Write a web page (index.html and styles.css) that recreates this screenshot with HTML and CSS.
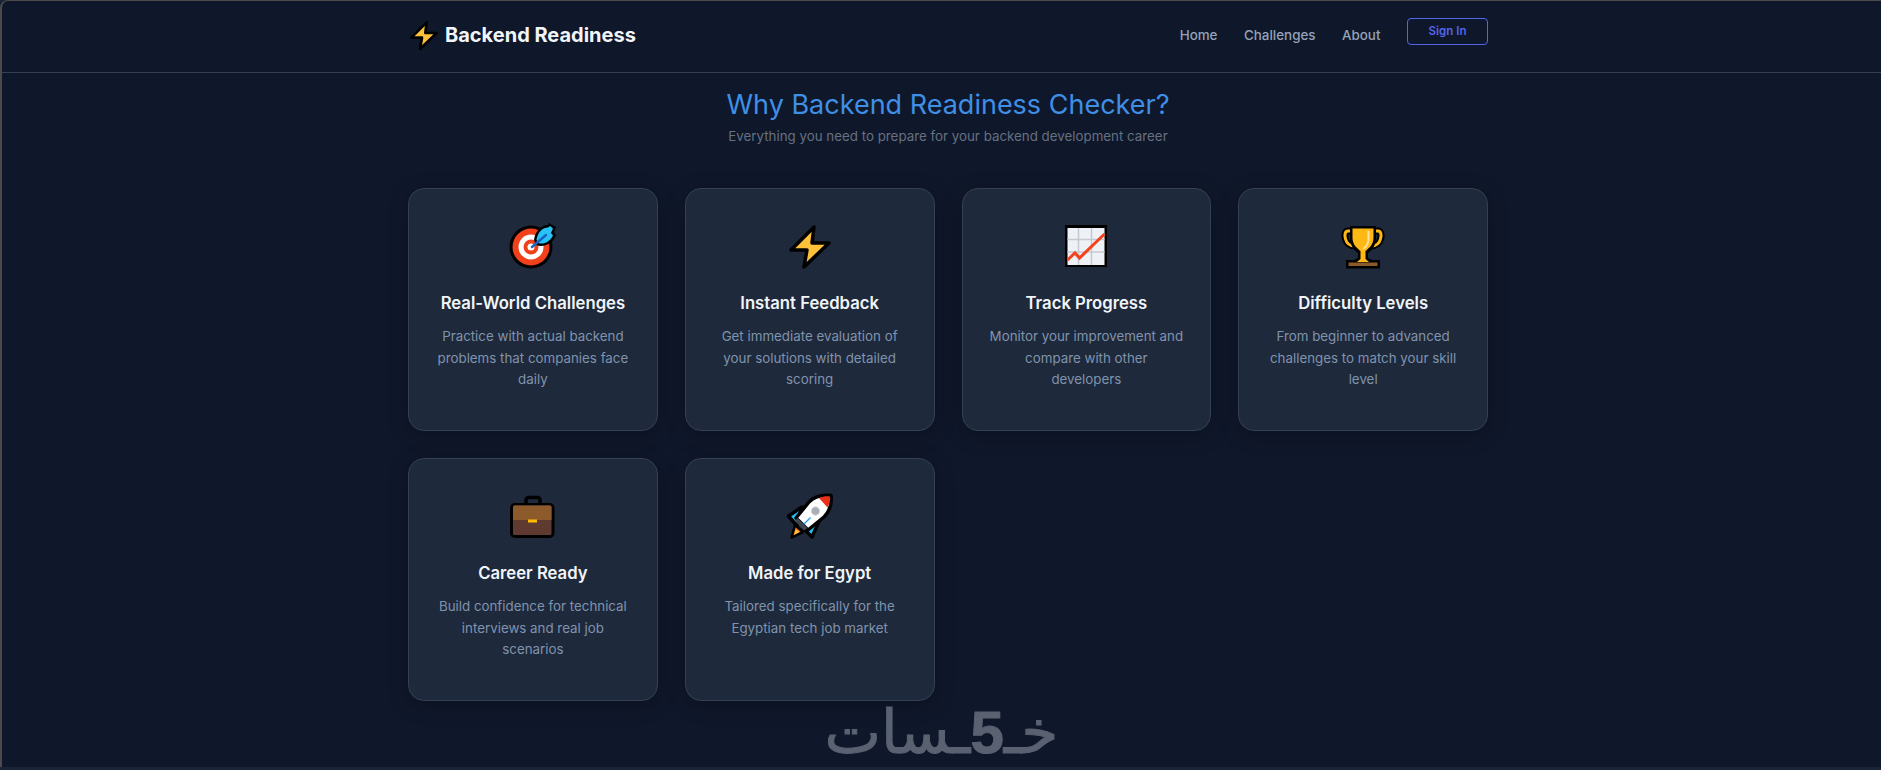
FILE: index.html
```html
<!DOCTYPE html>
<html lang="en">
  <head>
    <meta charset="UTF-8" />
    <meta name="viewport" content="width=device-width, initial-scale=1.0" />
    <title>Backend Readiness</title>
    <link rel="stylesheet" href="styles.css">
  </head>
  <body>
    <div id="page">
      <header id="top">
        <div class="top-inner">
          <a class="logo" href="#">
            <svg class="logo-icon" viewBox="0 0 48 48"><polygon points="28,5 5,28 21,28 18,45 43,21 26,21" fill="#ffc03a" stroke="#000" stroke-width="4" stroke-linejoin="round"/></svg>
            <span>Backend Readiness</span>
          </a>
          <nav class="menu">
            <a href="#">Home</a>
            <a href="#">Challenges</a>
            <a href="#">About</a>
            <a class="signin" href="#">Sign In</a>
          </nav>
        </div>
      </header>

      <section id="why">
        <h2>Why Backend Readiness Checker?</h2>
        <p class="sub">Everything you need to prepare for your backend development career</p>

        <div class="cards">
          <div class="card">
            <svg class="icon" viewBox="0 0 48 48">
              <circle cx="22" cy="25" r="21.5" fill="#000"/>
              <circle cx="22" cy="25" r="18.5" fill="#f0401c"/>
              <circle cx="22" cy="25" r="12.5" fill="#fff"/>
              <circle cx="22" cy="25" r="7.5" fill="#f0401c"/>
              <circle cx="22" cy="25" r="3.5" fill="#fff"/>
              <path d="M25 18 C26 9 33 3 39 3 L40 1 L47 5 L45 10 L47 13 C44 22 34 26 27 23 Z" fill="#000"/>
              <path d="M27.5 18 C28.5 10 34 5.5 39 5.5 L41 4 L44 6.5 L42 11 L44 13.5 C41 20 34 23 29.5 21 Z" fill="#29c2f6"/>
              <line x1="23" y1="25" x2="37" y2="13" stroke="#1666c0" stroke-width="2.5" stroke-linecap="round"/>
            </svg>
            <h3>Real-World Challenges</h3>
            <p>Practice with actual backend problems that companies face daily</p>
          </div>
          <div class="card">
            <svg class="icon" viewBox="0 0 48 48"><polygon points="28,5 5,28 21,28 18,45 43,21 26,21" fill="#ffc03a" stroke="#000" stroke-width="3.5" stroke-linejoin="round"/></svg>
            <h3>Instant Feedback</h3>
            <p>Get immediate evaluation of your solutions with detailed scoring</p>
          </div>
          <div class="card">
            <svg class="icon" viewBox="0 0 48 48">
              <rect x="3" y="3" width="42" height="42" fill="#000"/>
              <rect x="5.5" y="6" width="37" height="37" fill="#eef1f5"/>
              <path d="M16.5 6V43M29.5 6V43M5.5 17.5H42.5M5.5 30H42.5" stroke="#c6c9d1" stroke-width="1.5"/>
              <polyline points="5.5,38 13,31 17.5,36 42.5,12" fill="none" stroke="#f4411e" stroke-width="3"/>
            </svg>
            <h3>Track Progress</h3>
            <p>Monitor your improvement and compare with other developers</p>
          </div>
          <div class="card">
            <svg class="icon" viewBox="0 0 48 48">
              <path d="M14 9H9C5.500 9 5.500 14 6.500 17C7.500 21 11 24 16 24M34 9H39C42.500 9 42.500 14 41.500 17C40.500 21 37 24 32 24" fill="none" stroke="#000" stroke-width="7"/>
              <path d="M14 9H9C5.500 9 5.500 14 6.500 17C7.500 21 11 24 16 24M34 9H39C42.500 9 42.500 14 41.500 17C40.500 21 37 24 32 24" fill="none" stroke="#fdb813" stroke-width="3"/>
              <path d="M11 4H37V16C37 24 32 29 29 31V36L33 38H41V46.500H7V38H15L19 36V31C16 29 11 24 11 16Z" fill="#000"/>
              <path d="M13.500 6.500H34.500V16C34.500 23 29 27 26.500 29V37L30 40H18L21.500 37V29C19 27 13.500 23 13.500 16Z" fill="#fdb813"/>
              <rect x="9.500" y="40.500" width="29" height="3.500" fill="#8a5a2b"/>
              <path d="M29.500 9V18C29 22 27 25 24 27" fill="none" stroke="#ffe2a3" stroke-width="2"/>
            </svg>
            <h3>Difficulty Levels</h3>
            <p>From beginner to advanced challenges to match your skill level</p>
          </div>
          <div class="card">
            <svg class="icon" viewBox="0 0 48 48">
              <rect x="17" y="5.500" width="14" height="9" rx="2.500" fill="none" stroke="#000" stroke-width="3.500"/>
              <rect x="1" y="11" width="44.500" height="35" rx="5" fill="#000"/>
              <rect x="4" y="13.500" width="38.500" height="29.500" rx="1.500" fill="#5e3a30"/>
              <path d="M4 15A1.500 1.500 0 0 1 5.500 13.500H41A1.500 1.500 0 0 1 42.500 15V28H4Z" fill="#8d5a2c"/>
              <rect x="19" y="27.500" width="9" height="3" fill="#ffb900"/>
            </svg>
            <h3>Career Ready</h3>
            <p>Build confidence for technical interviews and real job scenarios</p>
          </div>
          <div class="card">
            <svg class="icon" viewBox="0 0 48 48">
              <polygon points="2.500,24 16,15 11,34" fill="#29c2f6" stroke="#000" stroke-width="3.500" stroke-linejoin="round"/>
              <polygon points="26,45 34,27 17,36" fill="#29c2f6" stroke="#000" stroke-width="3.500" stroke-linejoin="round"/>
              <polygon points="5.500,45.500 9,33 17,40" fill="#f0731c" stroke="#000" stroke-width="2.500" stroke-linejoin="round"/>
              <polygon points="8,43 10,37.500 13.500,40" fill="#ffc83a"/>
              <path d="M45 3.500C36 2.500 28 5 23 10L10 26L22 38L38 25C43 20 46 12 45 3.500Z" fill="#fff" stroke="#000" stroke-width="3.500" stroke-linejoin="round"/>
              <path d="M44 4.500C40 4 37 4.500 33 6L41.500 15.500C43.500 12 44.500 8.500 44 4.500Z" fill="#e8301a"/>
              <path d="M11.500 26L21.500 36L18 38.500L9 29Z" fill="#3e4450"/>
              <circle cx="29.500" cy="19" r="4.200" fill="#a9aeb7" stroke="#d6d9de"/>
              <line x1="18" y1="32" x2="24.500" y2="25.500" stroke="#29a3f0" stroke-width="1.500"/>
            </svg>
            <h3>Made for Egypt</h3>
            <p>Tailored specifically for the Egyptian tech job market</p>
          </div>
        </div>
      </section>

      <div class="mark" dir="rtl" lang="ar">خـ<b>5</b>ـسات</div>
    </div>
  </body>
</html>
```

FILE: styles.css
```css
* {
  margin: 0;
  padding: 0;
  box-sizing: border-box;
}
html,
body {
  height: 770px;
  overflow: hidden;
}
body {
  background-color: #1a2334;
  font-family: Inter, "Liberation Sans", sans-serif;
}
a {
  color: inherit;
  text-decoration: none;
}
#page {
  height: 767px;
  background-color: #0f172a;
  border-left: 2px solid #4a4a4c;
  border-top: 1px solid #4a4a4c;
  border-top-left-radius: 8px;
}

/* header */
#top {
  height: 72px;
  border-bottom: 1px solid #334155;
}
.top-inner {
  width: 1080px;
  margin-left: 406px;
  padding-bottom: 3px;
  height: 100%;
  display: flex;
  justify-content: space-between;
  align-items: center;
}
.logo {
  display: flex;
  align-items: center;
  gap: 5px;
  color: #f1f5f9;
  font-size: 20px;
  font-weight: 700;
}
.logo-icon {
  width: 32px;
  height: 32px;
}
.menu {
  display: flex;
  align-items: center;
  gap: 26.5px;
  color: #94a3b8;
  font-size: 13.4px;
  font-weight: 500;
}
.signin {
  width: 81px;
  height: 27px;
  margin-bottom: 8px;
  display: flex;
  align-items: center;
  justify-content: center;
  border: 1px solid #5465e8;
  border-radius: 4px;
  color: #5465e8;
  font-size: 11.5px;
  font-weight: 600;
}

/* features */
#why {
  width: 1080px;
  margin-left: 406px;
  padding-top: 15px;
  text-align: center;
}
#why h2 {
  color: #3f8fe6;
  font-size: 27px;
  font-weight: 400;
  line-height: 34px;
}
.sub {
  margin-top: 4px;
  color: #667080;
  font-size: 13.33px;
  line-height: 20px;
}
.cards {
  margin-top: 42px;
  display: grid;
  grid-template-columns: repeat(4, 1fr);
  gap: 27px;
}
.card {
  height: 243px;
  padding: 33px 26.5px 0;
  background-color: #1e293b;
  border: 1px solid #334155;
  border-radius: 16px;
  box-shadow: 0 4px 20px rgba(0, 0, 0, 0.25);
}
.icon {
  display: block;
  width: 48px;
  height: 48px;
  margin: 0 auto;
}
.card h3 {
  margin-top: 21px;
  color: #f1f5f9;
  font-size: 16.7px;
  font-weight: 600;
  line-height: 24px;
}
.card p {
  margin-top: 11px;
  color: #8093ad;
  font-size: 13.33px;
  line-height: 21.6px;
}

/* watermark */
.mark {
  text-align: center;
  color: #5a6170;
  font-family: "DejaVu Sans", sans-serif;
  font-size: 60px;
  line-height: 62px;
  -webkit-text-stroke: 1px #5a6170;
}
.mark b {
  font-family: "Liberation Sans", sans-serif;
}
```
